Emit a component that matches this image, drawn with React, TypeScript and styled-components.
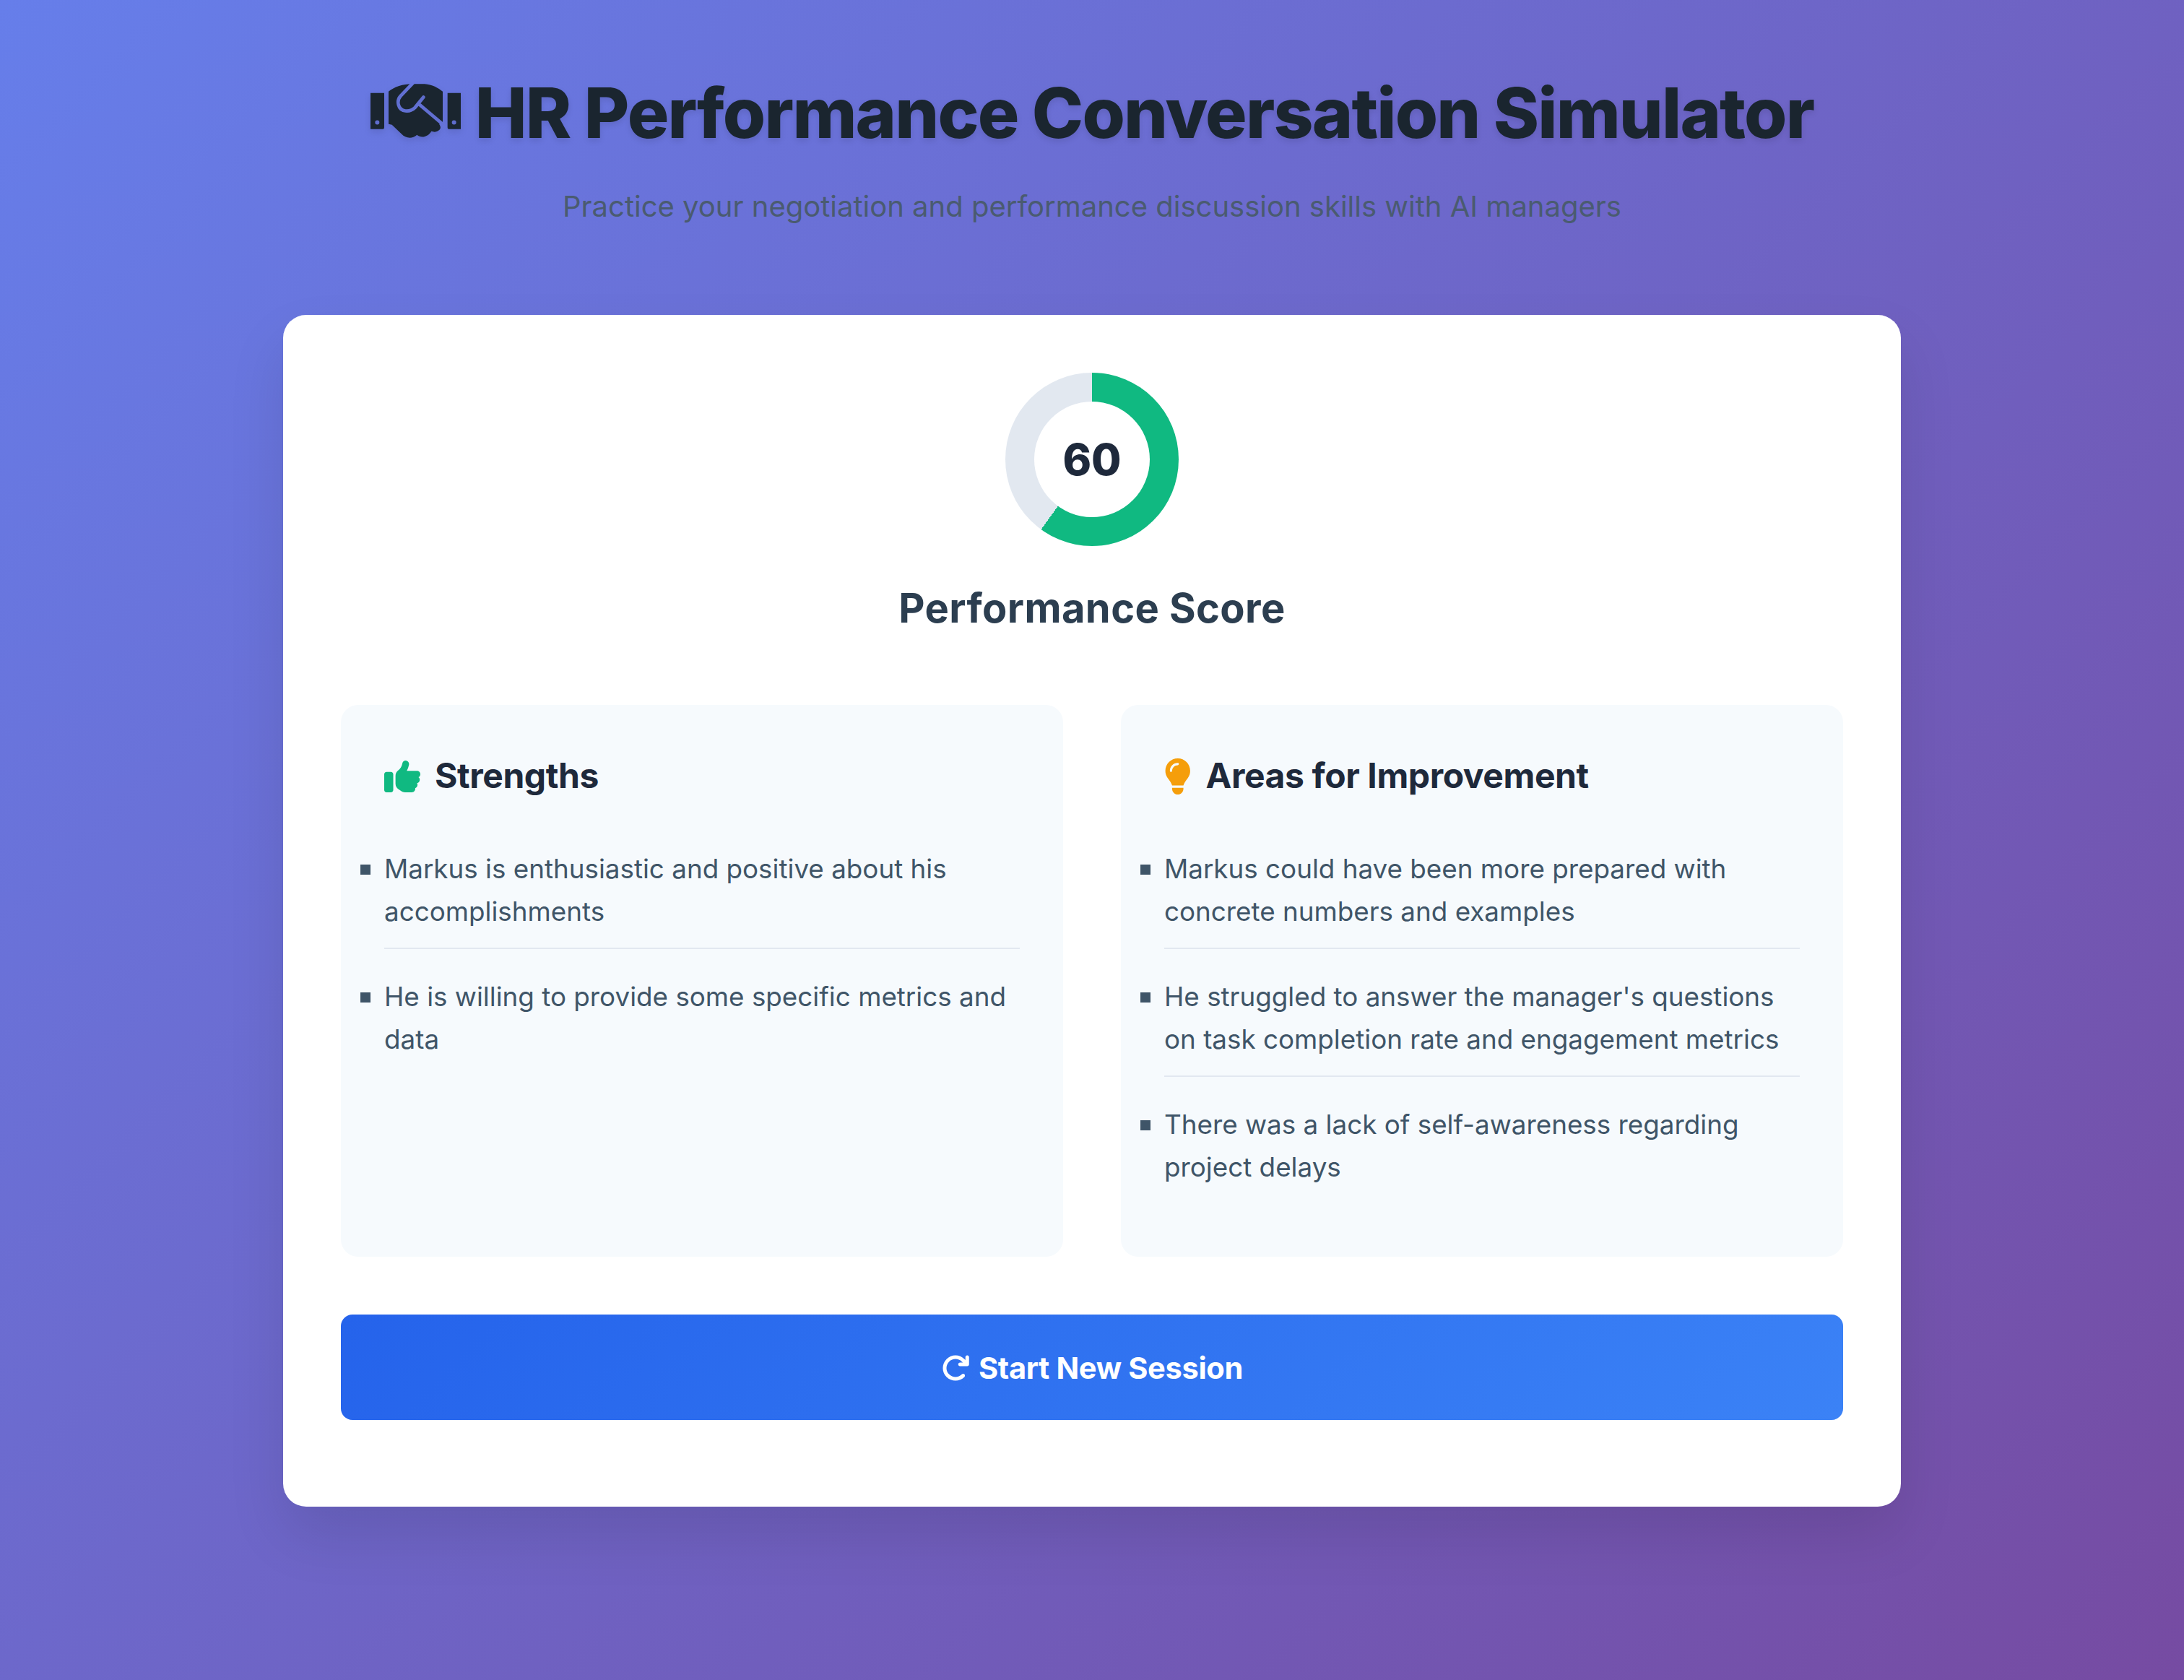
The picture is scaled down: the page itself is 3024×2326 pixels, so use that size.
import React from 'react';
import styled, { createGlobalStyle } from 'styled-components';
import { FaThumbsUp, FaLightbulb, FaArrowRotateRight } from 'react-icons/fa6';

const GlobalStyle = createGlobalStyle`
	* {
		box-sizing: border-box;
	}
	body {
		margin: 0;
		font-family: Inter, 'Liberation Sans', sans-serif;
		line-height: 1.6;
	}
`;
const Page = styled.div`
	min-height: 2326px;
	padding: 80px 392px 0;
	background: linear-gradient(135deg, #667eea 0%, #764ba2 100%);
`;
const Header = styled.header`
	text-align: center;
	margin-bottom: 118.4px;
`;
const Title = styled.h1`
	display: flex;
	align-items: center;
	justify-content: center;
	gap: 20px;
	margin: 0 0 20px;
	font-size: 96px;
	font-weight: 800;
	letter-spacing: -1.8px;
	color: #1a252f;
	text-shadow: 0 4px 8px rgba(0, 0, 0, 0.1);
`;
const HandshakeSvg = styled.svg`
	width: 125px;
	height: 76px;
	margin-top: -6px;
	flex: none;
	filter: drop-shadow(0 4px 4px rgba(0, 0, 0, 0.1));
`;
const Subtitle = styled.p`
	margin: 0;
	font-size: 40px;
	color: #4a5b70;
`;
const Card = styled.main`
	padding: 80px 80px 120px;
	background: #fff;
	border-radius: 32px;
	box-shadow: 0 40px 80px rgba(0, 0, 0, 0.1);
`;
const ScoreBlock = styled.section`
	display: flex;
	flex-direction: column;
	align-items: center;
	margin-bottom: 88.6px;
`;
const ScoreRing = styled.div<{ $score: number }>`
	width: 240px;
	height: 240px;
	display: flex;
	align-items: center;
	justify-content: center;
	border-radius: 50%;
	background: conic-gradient(#10b981 0deg ${(p) => p.$score * 3.6}deg, #e2e8f0 ${(p) => p.$score * 3.6}deg 360deg);
`;
const ScoreInner = styled.div`
	width: 160px;
	height: 160px;
	display: flex;
	align-items: center;
	justify-content: center;
	border-radius: 50%;
	background: #fff;
	font-size: 60px;
	font-weight: 800;
	color: #1e293b;
`;
const ScoreLabel = styled.h2`
	margin: 42px 0 0;
	font-size: 56px;
	font-weight: 700;
	letter-spacing: 0.4px;
	color: #2c3e50;
`;
const Panels = styled.section`
	display: grid;
	grid-template-columns: 1fr 1fr;
	gap: 80px;
	margin-bottom: 80px;
`;
const Panel = styled.div`
	min-height: 764px;
	padding: 60px;
	background: #f6fafd;
	border-radius: 24px;
`;
const PanelTitle = styled.h3`
	display: flex;
	align-items: center;
	gap: 20px;
	margin: 0 0 60.8px;
	font-size: 48px;
	font-weight: 700;
	letter-spacing: -0.4px;
	color: #1e293b;
`;
const PanelIcon = styled.span<{ $color: string; $width: number }>`
	display: flex;
	color: ${(p) => p.$color};
	svg {
		width: ${(p) => p.$width}px;
		height: 50px;
	}
`;
const Items = styled.ul`
	margin: 0;
	padding: 0;
	list-style: none;
`;
const Item = styled.li`
	position: relative;
	margin-bottom: 37.6px;
	padding-bottom: 20px;
	font-size: 36.8px;
	color: #3f5568;
	border-bottom: 2px solid #e2e8f0;
	&::before {
		content: '';
		position: absolute;
		left: -33px;
		top: 23px;
		width: 14px;
		height: 14px;
		background: #3f5568;
	}
	&:last-child {
		margin-bottom: 0;
		border-bottom: none;
	}
`;
const RestartButton = styled.button`
	width: 100%;
	height: 146px;
	padding: 2px 0 0;
	display: flex;
	align-items: center;
	justify-content: center;
	gap: 12px;
	border: none;
	border-radius: 16px;
	background: linear-gradient(135deg, #2563eb, #3b82f6);
	font-family: inherit;
	font-size: 41.6px;
	font-weight: 700;
	letter-spacing: -0.35px;
	color: #fff;
`;

const strengths = [
	'Markus is enthusiastic and positive about his accomplishments',
	'He is willing to provide some specific metrics and data',
];
const improvements = [
	'Markus could have been more prepared with concrete numbers and examples',
	"He struggled to answer the manager's questions on task completion rate and engagement metrics",
	'There was a lack of self-awareness regarding project delays',
];

const Handshake = () => (
	<HandshakeSvg viewBox="33 38 375 227" aria-hidden="true">
		<mask id="handshake-gap">
			<rect x="0" y="0" width="450" height="300" fill="#fff" />
			<path
				d="M208 36 L158 88 C140 108 146 146 178 150 C196 152 208 146 218 136 L253 93 M232 120 L336 208"
				fill="none"
				stroke="#000"
				strokeWidth="14"
				strokeLinecap="round"
			/>
		</mask>
		<g fill="#1a252f">
			<path d="M33 76 H90 V218 Q90 226 82 226 H33 Z M61 189 A9 9 0 1 0 61 207 A9 9 0 1 0 61 189 Z" fillRule="evenodd" />
			<path d="M353 76 H408 V226 H361 Q353 226 353 218 Z M380 189 A9 9 0 1 0 380 207 A9 9 0 1 0 380 189 Z" fillRule="evenodd" />
			<path
				mask="url(#handshake-gap)"
				d="M108 70 C130 50 170 38 205 38 L258 38 C288 40 315 54 333 70 L333 198 L318 205 C330 222 322 232 300 238 L286 235 C272 258 245 266 226 250 C206 268 178 264 162 246 L122 208 L108 205 Z"
			/>
		</g>
	</HandshakeSvg>
);

const App = () => {
	return (
		<Page>
			<GlobalStyle />
			<Header>
				<Title>
					<Handshake />
					<span>HR Performance Conversation Simulator</span>
				</Title>
				<Subtitle>Practice your negotiation and performance discussion skills with AI managers</Subtitle>
			</Header>
			<Card>
				<ScoreBlock>
					<ScoreRing $score={60}>
						<ScoreInner>60</ScoreInner>
					</ScoreRing>
					<ScoreLabel>Performance Score</ScoreLabel>
				</ScoreBlock>
				<Panels>
					<Panel>
						<PanelTitle>
							<PanelIcon $color="#10b981" $width={50}><FaThumbsUp /></PanelIcon>
							Strengths
						</PanelTitle>
						<Items>
							{strengths.map((text) => (
								<Item key={text}>{text}</Item>
							))}
						</Items>
					</Panel>
					<Panel>
						<PanelTitle>
							<PanelIcon $color="#f59e0b" $width={37.5}><FaLightbulb /></PanelIcon>
							Areas for Improvement
						</PanelTitle>
						<Items>
							{improvements.map((text) => (
								<Item key={text}>{text}</Item>
							))}
						</Items>
					</Panel>
				</Panels>
				<RestartButton>
					<FaArrowRotateRight size={40} />
					Start New Session
				</RestartButton>
			</Card>
		</Page>
	);
};
export default App;
